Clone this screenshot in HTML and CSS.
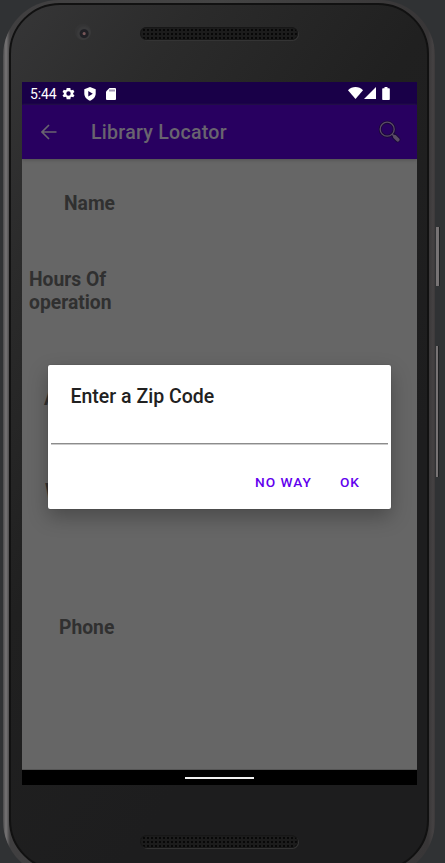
FILE: index.html
```html
<!DOCTYPE html>
<html lang="en">
<head>
<meta charset="utf-8">
<title>Library Locator</title>
<link rel="stylesheet" href="styles.css">
</head>
<body>
<div class="phone">
  <div class="face">
    <div class="top-bezel"><span class="camera"></span><span class="speaker"></span></div>
    <main class="screen">
      <div class="status">
        <span class="time">5:44</span>
        <svg class="gear" width="15" height="15" viewBox="0 0 24 24"><path fill="#fff" fill-rule="evenodd" d="M19.400 13a7.500 7.500 0 0 0 0-2l2.100-1.600-2-3.500-2.500 1a7.700 7.700 0 0 0-1.700-1L15 3H9l-.4 2.900a7.700 7.700 0 0 0-1.700 1l-2.500-1-2 3.500L4.600 11a7.500 7.500 0 0 0 0 2l-2.200 1.600 2 3.500 2.500-1a7.700 7.700 0 0 0 1.700 1L9 21h6l.4-2.900a7.700 7.700 0 0 0 1.700-1l2.500 1 2-3.500zM12 8.500a3.500 3.500 0 1 1 0 7 3.500 3.500 0 0 1 0-7z"/></svg>
        <svg class="shield" width="12" height="14" viewBox="0 0 12 14"><path fill="#fff" fill-rule="evenodd" d="M6 0l5.700 2.300v4.200c0 3.300-2.500 6.100-5.700 7.200C2.800 12.600.3 9.800.3 6.500V2.300zM4.300 4v5.600L8.800 6.800z"/></svg>
        <svg class="sd" width="10" height="12" viewBox="0 0 10 12"><path fill="#fff" d="M3.500 0H9a1 1 0 0 1 1 1v10a1 1 0 0 1-1 1H1a1 1 0 0 1-1-1V3.500z"/><path stroke="#190048" stroke-width=".8" d="M4 1.500v2M6 1.500v2M8 1.500v2"/></svg>
        <svg class="wifi" width="15" height="12" viewBox="0 0 15 12"><path fill="#fff" d="M0 3.200C4-1 11-1 15 3.200L7.500 12z"/></svg>
        <svg class="signal" width="12" height="12" viewBox="0 0 12 12"><path fill="#fff" d="M12 0v12H0z"/></svg>
        <svg class="battery" width="8" height="13" viewBox="0 0 8 13"><path fill="#fff" d="M2.500 0h3v1.300H7a.8.8 0 0 1 .8.800v10a.8.8 0 0 1-.8.900H1a.8.8 0 0 1-.8-.9v-10a.8.8 0 0 1 .8-.8h1.500z"/></svg>
      </div>
      <header class="appbar">
        <svg class="back" width="16" height="16" viewBox="0 0 16 16"><path fill="none" stroke="#69646f" stroke-width="1.600" d="M15.500 8H1.500M8 1L1 8l7 7"/></svg>
        <h1>Library Locator</h1>
        <svg class="search" width="24" height="24" viewBox="0 0 24 24"><circle cx="9.200" cy="9.200" r="7" fill="none" stroke="#1a0838" stroke-width="3"/><path stroke="#1a0838" stroke-width="5.500" stroke-linecap="round" d="M16.500 16.500l3 3"/><circle cx="9.200" cy="9.200" r="7" fill="none" stroke="#5b4c66" stroke-width="1.300"/><path stroke="#5b4c66" stroke-width="1.500" d="M14 14l3 3"/><path stroke="#5b4c66" stroke-width="3.700" stroke-linecap="round" d="M16.800 16.800l3 3"/></svg>
      </header>
      <section class="content">
        <h2 class="name">Name</h2>
        <h2 class="hours">Hours Of operation</h2>
        <h2 class="address">A</h2>
        <h2 class="website">W</h2>
        <h2 class="tel">Phone</h2>
      </section>
      <div class="nav"><span></span></div>
      <div class="dialog">
        <h3>Enter a Zip Code</h3>
        <div class="field"></div>
        <div class="actions"><span>NO WAY</span><span>OK</span></div>
      </div>
    </main>
    <div class="bottom-bezel"><span class="speaker"></span></div>
  </div>
</div>
<span class="side power"></span>
<span class="side volume"></span>
</body>
</html>
```
FILE: styles.css
```css
* { box-sizing: border-box; }
html, body { margin: 0; height: 863px; overflow: hidden; }
body { position: relative; background: #303234; font-family: Roboto, sans-serif; }
h1, h2, h3 { margin: 0; }

.phone {
  width: 432px;
  height: 877px;
  margin-left: 3px;
  padding: 3px 6px 6px;
  border-radius: 56px;
  background: linear-gradient(90deg, #4b4a4b 0, #777576 3px, #403f40 7px, #444 50%, #383637 425px, #454243 430px, #3c393a 432px);
}
.face {
  display: flex;
  flex-direction: column;
  height: 868px;
  padding: 0 10px 0 11px;
  border: 2px solid #111;
  border-radius: 51px;
  background: linear-gradient(125deg, #363637 0, #2b2b2b 18%, #202020 42%, #1d1d1e 70%);
}
.top-bezel { flex: none; display: flex; height: 77px; padding-top: 22px; }
.camera {
  width: 16px;
  height: 16px;
  margin: -3px 49px 0 53px;
  border-radius: 50%;
  background: radial-gradient(circle at 57% 60%, #79585a 0 1px, #202025 2px 4px, #3a3a3b 5px 6px, #343435 8px);
}
.speaker {
  width: 158px;
  height: 13px;
  border-radius: 7px;
  background: radial-gradient(circle, #080808 0 1px, #1c1c1c 1.500px) 2px 1px / 4px 4px;
  box-shadow: inset 0 0 0 1px #171717, 1px 1px 0 #343434;
}
.bottom-bezel { display: flex; justify-content: center; padding: 50px 2px 0 0; }

.screen {
  position: relative;
  flex: none;
  display: flex;
  flex-direction: column;
  width: 395px;
  height: 703px;
  overflow: hidden;
  background: #666;
}
.status { display: flex; height: 23px; padding: 5px 27px 0 8px; background: #190048; color: #fff; }
.time { width: 31px; font-size: 14px; letter-spacing: -.15px; line-height: 15px; }
.gear { margin-top: -1px; }
.shield { margin-left: 8px; }
.sd { margin: 1px 0 0 10px; }
.wifi { margin-left: auto; }
.signal { margin-left: 1px; }
.battery { margin-left: 6px; }

.appbar {
  position: relative;
  display: flex;
  align-items: center;
  height: 54px;
  padding: 0 15px 0 19px;
  background: #280060;
  box-shadow: 0 1px 3px #505050;
}
.appbar h1 { padding-top: 1px; margin-left: 34px; color: #69646f; font-size: 19.600px; font-weight: 500; letter-spacing: .25px; line-height: 24px; }
.search { margin-left: auto; }

.content { flex: 1; padding-top: 33px; color: #303030; }
.content h2 { font-size: 19.300px; font-weight: 700; line-height: 23px; white-space: nowrap; }
.content .name { padding-left: 42px; }
.content .hours { width: 110px; margin-top: 53px; padding-left: 7px; white-space: normal; }
.content .address { margin-top: 73px; padding-left: 22px; }
.content .website { margin-top: 70px; padding-left: 23px; }
.content .tel { margin-top: 113px; padding-left: 37px; }

.nav { display: flex; align-items: center; justify-content: center; height: 15px; padding-top: 1px; background: #000; box-shadow: 0 -1px 0 #555; }
.nav span { width: 69px; height: 2px; background: #f1f1f1; }

.dialog {
  position: absolute;
  top: 283px;
  left: 26px;
  width: 343px;
  height: 144px;
  padding-top: 20px;
  border-radius: 2px;
  background: #fff;
  box-shadow: 0 8px 20px rgba(0,0,0,.28), 0 0 1px #333;
}
.dialog h3 { padding-left: 22.500px; color: #212121; font-size: 19.500px; font-weight: 500; line-height: 24px; }
.field { height: 35px; margin: 0 3px; border-bottom: 1px solid #8c8c8c; box-shadow: 0 1px 0 #cbcbcb; }
.actions { display: flex; justify-content: flex-end; gap: 28px; padding: 29px 31px 0 0; color: #6200ee; font-size: 13.700px; font-weight: 500; letter-spacing: 1px; line-height: 18px; }

.side { position: absolute; width: 3px; background: #777374; box-shadow: 1px 0 0 #202122; }
.power { top: 227px; left: 436px; height: 59px; }
.volume { top: 346px; left: 436px; width: 2px; height: 131px; }
```
